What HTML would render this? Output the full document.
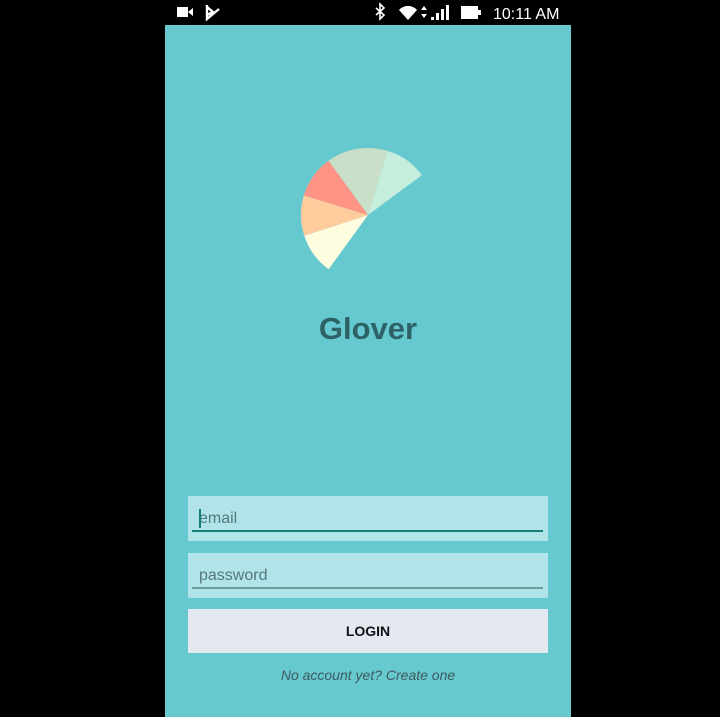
<!DOCTYPE html>
<html><head><meta charset="utf-8"><style>
html,body{margin:0;padding:0;background:#000;width:720px;height:717px;overflow:hidden;font-family:"Liberation Sans",sans-serif}
.screen{position:absolute;left:165px;top:25px;width:406px;height:692px;background:#66c9d0}
.sb{position:absolute;top:0;left:165px;width:406px;height:25px;color:#fff}
.title{position:absolute;left:0;width:406px;top:286px;text-align:center;font-size:31px;font-weight:bold;color:#2f6266}
.field{position:absolute;left:23px;width:360px;height:45px;background:#b0e4e9}
.field span{position:absolute;left:11px;top:14px;font-size:16px;color:#53777b}
.field i{position:absolute;left:4px;right:5px;height:2px}
.btn{position:absolute;left:23px;top:584px;width:360px;height:44px;background:#e4e9f1;text-align:center;line-height:44px;font-weight:bold;font-size:14px;color:#111}
.link{position:absolute;left:0;width:406px;top:642px;text-align:center;font-style:italic;font-size:14px;color:#3d5a5e}
</style></head><body>
<div class="sb">
<svg width="406" height="25" style="position:absolute;left:0;top:0">
<rect x="12" y="7" width="11" height="10" fill="#fff"/><polygon points="23,12 28,8 28,16" fill="#fff"/>
<path d="M42 5 L42 19 L54 9 M42 7 L48 12 L42 15" stroke="#fff" stroke-width="2.4" fill="none"/>
<path d="M211 8 L219 15 L215 19 L215 4 L219 8 L211 15" stroke="#fff" stroke-width="1.6" fill="none"/>
<path d="M234 10 A12 12 0 0 1 252 10 L243 20 Z" fill="#fff"/>
<polygon points="256,10 259,6 262,10" fill="#fff"/><polygon points="256,14 259,18 262,14" fill="#fff"/>
<rect x="266" y="17" width="3" height="3" fill="#fff"/><rect x="271" y="13" width="3" height="7" fill="#fff"/><rect x="276" y="9" width="3" height="11" fill="#fff"/><rect x="281" y="5" width="3" height="15" fill="#fff"/>
<rect x="296" y="6" width="17" height="13" fill="#fff"/><rect x="313" y="10" width="3" height="5" fill="#fff"/>
<text x="328" y="19" fill="#fff" font-family="Liberation Sans" font-size="16">10:11 AM</text>
</svg></div>
<div class="screen">
<svg width="406" height="300" style="position:absolute;left:0;top:0">
<g transform="translate(-165,-25)">
<path d="M368 215 L328.6 269.2 A67 67 0 0 1 304.3 235.7 Z" fill="#fffde0"/>
<path d="M368 215 L304.3 235.7 A67 67 0 0 1 303.9 195.4 Z" fill="#ffcc9e"/>
<path d="M368 215 L303.9 195.4 A67 67 0 0 1 328.6 160.8 Z" fill="#ff9385"/>
<path d="M368 215 L328.6 160.8 A67 67 0 0 1 387.6 150.9 Z" fill="#c9dfc8"/>
<path d="M368 215 L387.6 150.9 A67 67 0 0 1 421.9 175.1 Z" fill="#c5eedd"/>
</g></svg>
<div class="title">Glover</div>
<div class="field" style="top:471px"><span>email</span><b style="position:absolute;left:11px;top:13px;width:2px;height:19px;background:#17807f"></b><i style="top:34px;background:#17807f"></i></div>
<div class="field" style="top:528px"><span>password</span><i style="top:34px;height:1.5px;background:#6f9a9a"></i></div>
<div class="btn">LOGIN</div>
<div class="link">No account yet? Create one</div>
</div>
</body></html>
